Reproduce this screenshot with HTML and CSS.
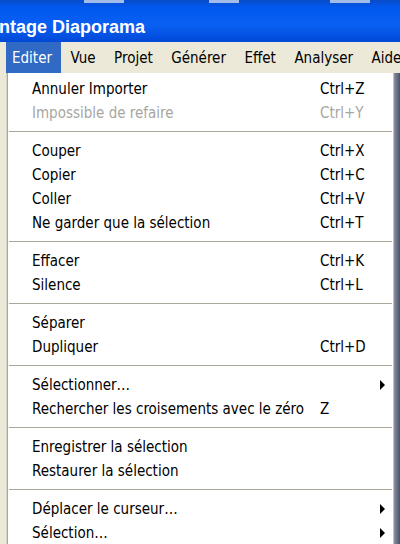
FILE: index.html
```html
<!DOCTYPE html>
<html lang="fr">
<head>
  <meta charset="UTF-8">
  <title>Montage Diaporama</title>
  <link rel="stylesheet" href="styles.css">
</head>
<body>
  <div class="titlebar">
    <div class="taskbits">
      <span class="bit bit-a"></span>
      <span class="bit bit-b"></span>
      <span class="bit bit-c"></span>
    </div>
    <span class="title">ntage Diaporama</span>
  </div>

  <div class="menubar">
    <span class="menu active">Editer</span>
    <span class="menu">Vue</span>
    <span class="menu">Projet</span>
    <span class="menu">Générer</span>
    <span class="menu">Effet</span>
    <span class="menu">Analyser</span>
    <span class="menu">Aide</span>
  </div>

  <div class="workspace">
    <div class="left-strip"></div>
    <div class="dropdown">
      <div class="item"><span>Annuler Importer</span><span class="key">Ctrl+Z</span></div>
      <div class="item disabled"><span>Impossible de refaire</span><span class="key">Ctrl+Y</span></div>
      <div class="sep"></div>
      <div class="item"><span>Couper</span><span class="key">Ctrl+X</span></div>
      <div class="item"><span>Copier</span><span class="key">Ctrl+C</span></div>
      <div class="item"><span>Coller</span><span class="key">Ctrl+V</span></div>
      <div class="item"><span>Ne garder que la sélection</span><span class="key">Ctrl+T</span></div>
      <div class="sep"></div>
      <div class="item"><span>Effacer</span><span class="key">Ctrl+K</span></div>
      <div class="item"><span>Silence</span><span class="key">Ctrl+L</span></div>
      <div class="sep"></div>
      <div class="item"><span>Séparer</span><span class="key"></span></div>
      <div class="item"><span>Dupliquer</span><span class="key">Ctrl+D</span></div>
      <div class="sep"></div>
      <div class="item"><span>Sélectionner…</span><span class="key"></span><span class="arrow"></span></div>
      <div class="item"><span>Rechercher les croisements avec le zéro</span><span class="key">Z</span></div>
      <div class="sep"></div>
      <div class="item"><span>Enregistrer la sélection</span><span class="key"></span></div>
      <div class="item"><span>Restaurer la sélection</span><span class="key"></span></div>
      <div class="sep"></div>
      <div class="item"><span>Déplacer le curseur…</span><span class="key"></span><span class="arrow"></span></div>
      <div class="item"><span>Sélection…</span><span class="key"></span><span class="arrow"></span></div>
    </div>
    <div class="shadow"></div>
  </div>
</body>
</html>
```

FILE: styles.css
```css
body {
  margin: 0;
  width: 400px;
  height: 544px;
  overflow: hidden;
  font-family: "DejaVu Sans Condensed", "DejaVu Sans", sans-serif;
  font-size: 15px;
  color: #000;
  background: #ece9d8;
}
.titlebar {
  height: 42px;
  background: linear-gradient(to bottom, #0a4cc8 0%, #0058ee 18%, #0a60f2 60%, #0048d8 100%);
  display: flex;
  flex-direction: column;
}
.taskbits {
  height: 4px;
  display: flex;
}
.bit {
  height: 3px;
  background: #c8d8f0;
  opacity: 0.8;
}
.bit-a {
  width: 40px;
  margin-left: 84px;
}
.bit-b {
  width: 30px;
  margin-left: 85px;
}
.bit-c {
  width: 40px;
  margin-left: 91px;
}
.title {
  color: #fff;
  font-family: "Liberation Sans", Arial, sans-serif;
  font-weight: bold;
  font-size: 18px;
  padding-top: 13px;
  margin-left: -1px;
}
.menubar {
  height: 31px;
  display: flex;
  align-items: stretch;
  padding-left: 6px;
  background: #ece9d8;
}
.menu {
  display: flex;
  align-items: center;
  padding: 0 9px;
  margin-right: 0.5px;
}
.menu.active {
  background: #316ac5;
  color: #fff;
  padding: 0 9px 0 6px;
}
.workspace {
  display: flex;
  height: 471px;
}
.left-strip {
  width: 6px;
  background: #ece9d8;
  border-right: 1px solid #d8d4c4;
}
.dropdown {
  flex: 1;
  background: #fff;
  border-left: 1px solid #aca899;
  border-right: 1px solid #c8c6bc;
  padding-top: 4px;
}
.shadow {
  width: 6px;
  background: linear-gradient(to right, #8a90a0, #4a5068);
}
.item {
  height: 24px;
  display: grid;
  grid-template-columns: 288px 50px 1fr;
  align-items: center;
  padding-left: 24px;
}
.item .key {
  white-space: nowrap;
}
.disabled {
  color: #a8a6a0;
}
.arrow {
  justify-self: end;
  margin-right: 8px;
  width: 0;
  height: 0;
  border-top: 5px solid transparent;
  border-bottom: 5px solid transparent;
  border-left: 5px solid #000;
}
.sep {
  height: 14px;
  display: flex;
  align-items: center;
}
.sep::before {
  content: "";
  flex: 1;
  height: 1px;
  background: #aca899;
  border-bottom: 1px solid #fff;
  margin: 0 1px;
}
```
